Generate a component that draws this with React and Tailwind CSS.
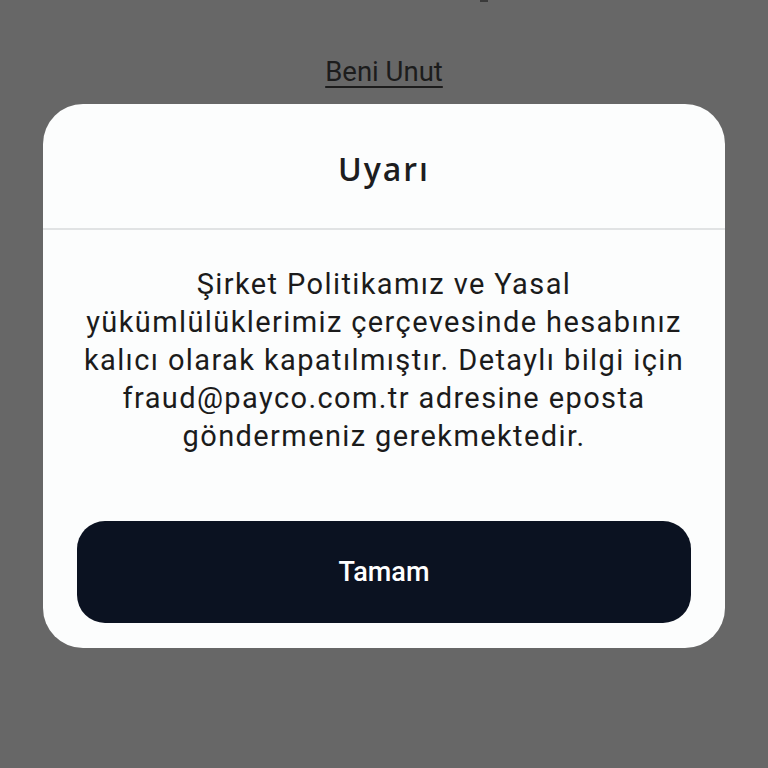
import React from "react";

export default function App() {
  return (
    <div
      className="w-full h-[768px] bg-[#676767] overflow-hidden flex flex-col items-center"
      style={{ fontFamily: "Roboto, 'Noto Sans', sans-serif" }}
    >
      {/* link behind the overlay */}
      <div className="h-[2px] w-[8px] bg-[#3a3a3a] self-start ml-[480px]" />
      <a className="mt-[54px] text-[27.5px] leading-[32px] text-[#1c1c1c] underline underline-offset-[5px] decoration-[1.5px]">
        Beni Unut
      </a>

      {/* dialog */}
      <div className="mt-[16px] w-[682px] bg-[#fcfdfd] rounded-[40px] flex flex-col">
        <div className="h-[126px] flex items-center justify-center border-b-2 border-[#e1e3e4]">
          <h2
            className="text-[32px] font-semibold text-[#1d1d1f] mt-[6px] tracking-[0.06em]"
            style={{ fontFamily: "'Open Sans', Lato, sans-serif" }}
          >
            Uyarı
          </h2>
        </div>
        <p className="pt-[35px] text-center text-[29px] leading-[38px] tracking-[0.048em] text-[#1b1b1b]">
          Şirket Politikamız ve Yasal
          <br />
          yükümlülüklerimiz çerçevesinde hesabınız
          <br />
          kalıcı olarak kapatılmıştır. Detaylı bilgi için
          <br />
          fraud@payco.com.tr adresine eposta
          <br />
          göndermeniz gerekmektedir.
        </p>
        <div className="px-[34px] pt-[66px] pb-[25px]">
          <button className="w-full h-[102px] rounded-[28px] bg-[#0b1221] text-white text-[27px] font-medium">
            Tamam
          </button>
        </div>
      </div>
    </div>
  );
}
